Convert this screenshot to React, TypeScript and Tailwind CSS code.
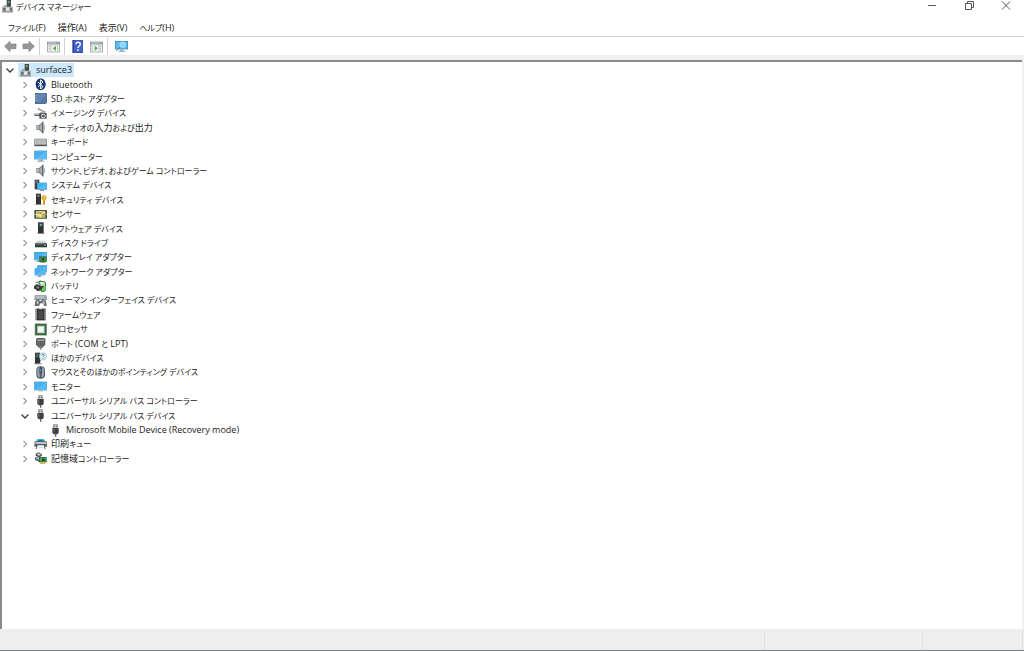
import React from "react";

type IconName =
  | "root" | "bluetooth" | "sd" | "imaging" | "speaker" | "keyboard" | "computer" | "system"
  | "security" | "sensor" | "software" | "disk" | "display" | "network" | "battery" | "hid"
  | "firmware" | "processor" | "port" | "other" | "mouse" | "monitor" | "usb" | "printer" | "storage";

const screen = (x: number, y: number, w: number, h: number) => (
  <>
    <rect x={x} y={y} width={w} height={h} fill="#2f83bd" />
    <rect x={x + 1} y={y + 1} width={w - 2} height={h - 2} fill="#44b0f2" />
    <path d={`M${x + 1} ${y + h - 1}L${x + w - 1} ${y + 1}V${y + h - 1}Z`} fill="#58bbf6" />
  </>
);

const drawings: Record<IconName, React.ReactNode> = {
  root: (
    <>
      <rect x="17" y="0" width="13" height="21" fill="#47494b" />
      <rect x="20" y="4" width="6" height="5" fill="#4fd16b" />
      <path d="M8 15h9v7H8z" fill="#a6a8aa" />
      <path d="M3 20h33v17H3z" fill="#b7babc" />
      <path d="M6 23h8v9H6zM26 23h7v9h-7z" fill="#6d7073" />
      <path d="M15 23h10v9H15z" fill="#e4e6e7" />
      <path d="M3 34h33v3H3z" fill="#85888a" />
    </>
  ),
  bluetooth: (
    <>
      <ellipse cx="20" cy="19" rx="15" ry="18" fill="#17396f" />
      <path d="M12 12l15 14-7 7V5l7 7-15 14" fill="none" stroke="#fff" strokeWidth="3" />
    </>
  ),
  sd: (
    <>
      <path d="M3 3h36v29l-5 4H3z" fill="#4d6a94" />
      <path d="M5 5h32v26H5z" fill="#6686b3" />
      <path d="M4 10h3v2H4zM4 15h3v2H4zM4 20h3v2H4zM4 25h3v2H4z" fill="#c6d3e5" />
      <path d="M12 34l24-25v22l-3 3z" fill="#5877a5" />
    </>
  ),
  imaging: (
    <>
      <path d="M13 3l22 11-2 4-22-11z" fill="#6c6c6c" />
      <path d="M15 6l17 9" stroke="#e2e2e2" strokeWidth="2" />
      <path d="M1 20h20v7H1z" fill="#606366" />
      <path d="M3 20h16v3H3z" fill="#d9dadb" />
      <path d="M16 18h22v17H16z" fill="#4a4d50" />
      <path d="M19 15h9v4h-9z" fill="#a4a7aa" />
      <circle cx="28" cy="27" r="7" fill="#e0e2e3" />
      <circle cx="28" cy="27" r="4" fill="#414c59" />
    </>
  ),
  speaker: (
    <>
      <path d="M7 12h8L28 1v37L15 27H7z" fill="#85888b" />
      <path d="M9 14h5v11H9z" fill="#b9bcbf" />
      <path d="M17 14l7-6v22l-7-5z" fill="#a9adb0" />
      <path d="M24 5l4-4v37l-4-3z" fill="#63666a" />
      <path d="M29 10c4 5 4 14 0 19" fill="none" stroke="#9fa3a6" strokeWidth="3" />
    </>
  ),
  keyboard: (
    <>
      <rect x="1" y="8" width="38" height="23" rx="1" fill="#777a7d" />
      <rect x="3" y="10" width="34" height="16" fill="#c2c5c7" />
      <path d="M5 13h30M5 17h30M5 21h30" stroke="#a6aaad" strokeWidth="2" strokeDasharray="3 1" />
      <path d="M2 28h36" stroke="#4c4f51" strokeWidth="3" />
    </>
  ),
  computer: (
    <>
      {screen(1, 2, 38, 26)}
      <path d="M15 28h11v4h5v3H9v-3h6z" fill="#9da8b0" />
    </>
  ),
  system: (
    <>
      <path d="M2 2h14v29H2z" fill="#3c3f42" />
      <path d="M5 5h8v3H5z" fill="#89969c" />
      <path d="M5 10h3v3H5z" fill="#45d36c" />
      {screen(9, 11, 30, 21)}
      <path d="M18 32h12v4H18z" fill="#8c969d" />
    </>
  ),
  security: (
    <>
      <rect x="6" y="2" width="15" height="33" fill="#303234" />
      <path d="M8 5h11v7H8z" fill="#515558" />
      <path d="M11 7h4v4h-4z" fill="#52dd70" />
      <path d="M27 20h6v15l-3 2-3-3z" fill="#d69c27" />
      <circle cx="30" cy="14" r="8" fill="#e4b342" />
      <circle cx="30" cy="10" r="2" fill="#fff1bd" />
      <path d="M2 34h22v2H2z" fill="#9a9c9e" />
    </>
  ),
  sensor: (
    <>
      <rect x="1" y="6" width="38" height="26" rx="2" fill="#4e5142" />
      <rect x="6" y="9" width="28" height="20" fill="#d3c971" />
      <path d="M7 10h9v7H7zM24 22h9v6h-9z" fill="#9dc06d" />
      <path d="M6 20l12 1 7-6h8M19 9v20" fill="none" stroke="#fff0ad" strokeWidth="3" />
      <path d="M17 13h5v5h-5zM27 17h4v4h-4z" fill="#d45b37" />
      <path d="M2 17h3v4H2zM35 17h3v4h-3z" fill="#babdaf" />
    </>
  ),
  software: (
    <>
      <rect x="12" y="1" width="17" height="32" fill="#303335" />
      <path d="M15 4h11v9H15z" fill="#505458" />
      <path d="M18 6h5v5h-5z" fill="#4ce174" />
      <path d="M10 33h21v3H10z" fill="#8e9193" />
    </>
  ),
  disk: (
    <>
      <path d="M9 14h24l6 10H3z" fill="#d0d3d5" />
      <path d="M3 22h36v12H3z" fill="#3a3d40" />
      <path d="M5 24h33v2H5z" fill="#717578" />
      <path d="M31 28h5v2h-5z" fill="#5bdd73" />
    </>
  ),
  display: (
    <>
      {screen(1, 3, 38, 25)}
      <path d="M8 28h12v5H8z" fill="#929ca3" />
      <path d="M16 16h22v17H16z" fill="#246b3c" />
      <path d="M19 19h16v10H19z" fill="#519c56" />
      <path d="M23 21h8v7h-8z" fill="#283d32" />
      <path d="M19 33h16v3H19z" fill="#d9ae42" />
    </>
  ),
  network: (
    <>
      {screen(10, 1, 29, 21)}
      <rect x="1" y="9" width="32" height="23" fill="#fff" />
      {screen(2, 10, 30, 21)}
      <path d="M11 31h11v5H11z" fill="#8aa2b3" />
      <path d="M34 23v6" stroke="#75a7c8" strokeWidth="3" fill="none" />
    </>
  ),
  battery: (
    <>
      <path d="M13 5l5-4 5 2h8l5 6v22l-5 5h-9z" fill="#3e7f43" />
      <path d="M17 6h15v12H17z" fill="#d9e6d6" />
      <path d="M22 18h13v13l-6 4-7-4z" fill="#62c755" />
      <path d="M1 17l8-5 14 7 4-3 2 3-4 5-5 8-10 1-7-7-4 1z" fill="#363a39" />
      <path d="M9 18l7 3-3 6-6-5z" fill="#89908c" />
      <path d="M5 8c7-5 10 2 15 6" stroke="#555b58" strokeWidth="3" fill="none" />
    </>
  ),
  hid: (
    <>
      <path d="M2 4h35v14H2z" fill="#73787c" />
      <path d="M4 6h31v10H4z" fill="#bfc4c8" />
      <path d="M6 9h27M6 13h27" stroke="#9ca1a5" strokeWidth="2" strokeDasharray="3 2" />
      <path d="M2 36l2-15 6-5h5l2 5h5l2-5h7l5 5 2 15h-7l-4-8h-8l-4 8z" fill="#626970" />
      <path d="M8 20h6v11H8zM26 20h6v11h-6z" fill="#b6bbc0" />
      <path d="M31 7h7v12h-7z" fill="#89a4b7" />
    </>
  ),
  firmware: (
    <>
      <path d="M4 2h32v35H4z" fill="#777" />
      <path d="M9 2h7v4h8V2h7v35H9z" fill="#333436" />
      <path d="M13 9h14v24H13z" fill="#484a4b" />
      <path d="M4 8h5M4 14h5M4 20h5M4 26h5M4 32h5M31 8h5M31 14h5M31 20h5M31 26h5M31 32h5" stroke="#c6c8c9" strokeWidth="2" />
    </>
  ),
  processor: (
    <>
      <path d="M2 1h37v37H2z" fill="#b0a27c" />
      <path d="M4 3h33v33H4z" fill="#286747" />
      <path d="M9 8h23v23H9z" fill="#b5c2b5" />
      <path d="M12 11h17v17H12z" fill="#f4f5ef" />
    </>
  ),
  port: (
    <>
      <path d="M9 3h22l3 4v16l-6 6H12l-6-6V7z" fill="#55585a" />
      <path d="M9 7h22v5H9z" fill="#9ca0a2" />
      <path d="M11 13v11M17 13v12M23 13v12M29 13v10" stroke="#85898b" strokeWidth="2" />
      <path d="M13 28h14v5H13zM18 33h4v5h-4z" fill="#777b7d" />
    </>
  ),
  other: (
    <>
      <path d="M3 2h15v33H3z" fill="#333638" />
      <path d="M5 5h11v5H5z" fill="#5c6264" />
      <path d="M7 11h4v4H7z" fill="#42e077" />
      <circle cx="27" cy="13" r="11" fill="#e0f1f6" stroke="#91afb8" strokeWidth="1.5" />
      <path d="M23 10c0-5 8-5 8 0 0 3-4 3-4 5M27 18v3" stroke="#398ab2" strokeWidth="3" fill="none" />
      <path d="M1 34h22v3H1zM18 24l4 2-4 5z" fill="#777a7c" />
    </>
  ),
  mouse: (
    <>
      <rect x="7" y="1" width="26" height="37" rx="12" fill="#555c64" />
      <path d="M10 12c0-5 3-8 7-9v32c-5-1-7-5-7-10zM23 3c5 1 7 4 7 9v13c0 5-2 9-7 10z" fill="#97a3b2" />
      <path d="M17 4h6v17h-6z" fill="#26364d" />
      <path d="M19 8h2v10h-2z" fill="#79b6e4" />
    </>
  ),
  monitor: (
    <>
      {screen(1, 5, 38, 26)}
      <path d="M14 31h12v3H14z" fill="#97a0a6" />
    </>
  ),
  usb: (
    <>
      <path d="M13 1h13v12H13z" fill="#777" />
      <path d="M15 3h9v9h-9z" fill="#c8c8c8" />
      <path d="M16 5h2v4h-2zM21 5h2v4h-2z" fill="#444" />
      <path d="M10 12h19v14l-4 5H14l-4-5z" fill="#3d3f40" />
      <path d="M13 14h3v12h-3z" fill="#6c6f71" />
      <path d="M18 31h4v7h-4z" fill="#5a5d5f" />
    </>
  ),
  printer: (
    <>
      <path d="M9 4h22l3 8H6z" fill="#35a9c6" />
      <path d="M14 5h12v5H14z" fill="#2866a5" />
      <path d="M2 10h36l1 16H1z" fill="#595e61" />
      <path d="M4 12h32v6H4z" fill="#bdc1c3" />
      <path d="M9 20h22l4 13H5z" fill="#545a5d" />
      <path d="M11 22h18l3 11H8z" fill="#f8f9f9" />
      <path d="M13 27h13v2H13z" fill="#9fd2de" />
    </>
  ),
  storage: (
    <>
      <path d="M5 5l9-4 9 5 1 6-9 4-10-5z" fill="#4d5357" />
      <path d="M8 7l6-3 7 4-6 3z" fill="#d3d7d9" />
      <path d="M3 17l10-4 11 7v8l-9 2-12-7z" fill="#575e60" />
      <path d="M5 18l8-3 9 6-8 3z" fill="#b9bebf" />
      <path d="M15 15h23v16H15z" fill="#256a3d" />
      <path d="M18 17h17v11H18z" fill="#51a26a" />
      <path d="M24 20h8v7h-8z" fill="#253d34" />
      <path d="M18 31h16v5H18z" fill="#dfb63c" />
    </>
  ),
};

function Icon({ name }: { name: IconName }) {
  return (
    <svg viewBox="0 0 39 39" className="size-[13px] shrink-0" aria-hidden="true">
      {drawings[name]}
    </svg>
  );
}

/* Kana are set one step smaller than Latin letters and kanji. */
function Label({ text }: { text: string }) {
  const runs = text.match(/[\u3001\u3040-\u30ff]+(?: [\u3040-\u30ff]+)*|[^\u3001\u3040-\u30ff]+/g) ?? [];
  return (
    <span className="whitespace-pre">
      {runs.map((run, i) => (
        <span key={i} className={/[\u3040-\u30ff]/.test(run) ? "text-[8px]" : "text-[9px]"}>
          {run}
        </span>
      ))}
    </span>
  );
}

type Row = { text: string; icon: IconName; level: 1 | 2 | 3; open?: boolean };

const rows: Row[] = [
  { text: "surface3", icon: "root", level: 1, open: true },
  { text: "Bluetooth", icon: "bluetooth", level: 2 },
  { text: "SD ホスト アダプター", icon: "sd", level: 2 },
  { text: "イメージング デバイス", icon: "imaging", level: 2 },
  { text: "オーディオの入力および出力", icon: "speaker", level: 2 },
  { text: "キーボード", icon: "keyboard", level: 2 },
  { text: "コンピューター", icon: "computer", level: 2 },
  { text: "サウンド、ビデオ、およびゲーム コントローラー", icon: "speaker", level: 2 },
  { text: "システム デバイス", icon: "system", level: 2 },
  { text: "セキュリティ デバイス", icon: "security", level: 2 },
  { text: "センサー", icon: "sensor", level: 2 },
  { text: "ソフトウェア デバイス", icon: "software", level: 2 },
  { text: "ディスク ドライブ", icon: "disk", level: 2 },
  { text: "ディスプレイ アダプター", icon: "display", level: 2 },
  { text: "ネットワーク アダプター", icon: "network", level: 2 },
  { text: "バッテリ", icon: "battery", level: 2 },
  { text: "ヒューマン インターフェイス デバイス", icon: "hid", level: 2 },
  { text: "ファームウェア", icon: "firmware", level: 2 },
  { text: "プロセッサ", icon: "processor", level: 2 },
  { text: "ポート (COM と LPT)", icon: "port", level: 2 },
  { text: "ほかのデバイス", icon: "other", level: 2 },
  { text: "マウスとそのほかのポインティング デバイス", icon: "mouse", level: 2 },
  { text: "モニター", icon: "monitor", level: 2 },
  { text: "ユニバーサル シリアル バス コントローラー", icon: "usb", level: 2 },
  { text: "ユニバーサル シリアル バス デバイス", icon: "usb", level: 2, open: true },
  { text: "Microsoft Mobile Device (Recovery mode)", icon: "usb", level: 3 },
  { text: "印刷キュー", icon: "printer", level: 2 },
  { text: "記憶域コントローラー", icon: "storage", level: 2 },
];

const indent = { 1: "pl-[5px]", 2: "pl-[20px]", 3: "pl-[48px]" };

function TreeRow({ row }: { row: Row }) {
  const root = row.level === 1;
  return (
    <li
      role="treeitem"
      aria-level={row.level}
      aria-selected={root}
      aria-expanded={row.level === 3 ? undefined : !!row.open}
      className={`flex min-h-0 items-center ${indent[row.level]}`}
    >
      {row.level !== 3 && (
        <button type="button" aria-label={`${row.text} の展開`} className="mr-[3px] flex size-[10px] shrink-0 items-center justify-center">
          <svg viewBox="0 0 10 10" className="size-[10px]" fill="none" strokeWidth="1.3" aria-hidden="true">
            {row.open ? <path d="M1.5 3.5L5 7l3.5-3.5" stroke="#3c3c3c" /> : <path d="M3.5 2L6.5 5 3.5 8" stroke="#a0a0a0" />}
          </svg>
        </button>
      )}
      <span className={`flex h-full items-center gap-1 pl-px pr-[2px] ${root ? "bg-[#cce8ff]" : ""}`}>
        <Icon name={row.icon} />
        <Label text={row.text} />
      </span>
    </li>
  );
}

function Arrow({ back }: { back?: boolean }) {
  return (
    <svg viewBox="0 0 39 39" className="size-[13px]" aria-hidden="true">
      <path
        d={back ? "M2 19L18 4v8h18v14H18v9z" : "M37 19L21 4v8H3v14h18v9z"}
        fill="#979797"
        stroke="#7c7c7c"
        strokeWidth="2"
        strokeLinejoin="round"
      />
    </svg>
  );
}

function PanelIcon({ right }: { right?: boolean }) {
  return (
    <svg viewBox="0 0 39 39" className="size-[13px]" aria-hidden="true">
      <path d="M0 5h39v32H0z" fill="#8d9399" />
      <path d="M2 13h35v22H2z" fill="#f5f6f6" />
      <path d="M3 7h25v4H3z" fill="#bcc5ce" />
      <path d="M30 8h6v2h-6z" fill="#edf0f2" />
      <path d={right ? "M26 13h2v22h-2zM2 14h35v2H2z" : "M11 13h2v22h-2zM2 14h35v2H2z"} fill="#a7adb2" />
      {right ? (
        <>
          <path d="M14 17l10 8-10 8z" fill="#51b539" />
          <path d="M30 20h4M30 25h4M30 30h4M5 20h4M5 25h4M5 30h4" stroke="#858f99" strokeWidth="2" />
        </>
      ) : (
        <>
          <path d="M27 17l-10 8 10 8z" fill="#51b539" />
          <path d="M5 20h4M5 25h4M5 30h4M30 20h4M30 25h4M30 30h4" stroke="#858f99" strokeWidth="2" />
        </>
      )}
    </svg>
  );
}

function HelpIcon() {
  return (
    <svg viewBox="0 0 39 39" className="size-[13px]" aria-hidden="true">
      <path d="M4 0h32v39H4z" fill="#2f459a" />
      <path d="M9 1h26v36H9z" fill="#4564cb" />
      <path d="M15 13c0-9 13-9 13 0 0 5-7 5-7 11M21 28v5" fill="none" stroke="#fff" strokeWidth="4" />
    </svg>
  );
}

function ScanIcon() {
  return (
    <svg viewBox="0 0 39 39" className="size-[13px]" aria-hidden="true">
      <path d="M0 3h39v25H0z" fill="#3488b7" />
      <path d="M2 5h35v21H2z" fill="#5dbceb" />
      <path d="M14 28h12v5h5v3H11v-3h3z" fill="#a5b3bd" />
      <path d="M17 20L4 32" stroke="#477c9c" strokeWidth="3" />
      <circle cx="23" cy="14" r="8" fill="#8ad6f6" stroke="#c5ebfa" strokeWidth="2" />
    </svg>
  );
}

function Divider() {
  return <span className="h-[17px] w-px bg-[#d0d0d0]" />;
}

const tool = "flex size-[13px] items-center justify-center";
const caption = "flex h-[11px] w-[37px] items-center justify-center";

export default function App() {
  return (
    <div className="flex min-h-screen flex-col bg-white font-['Open_Sans','Noto_Sans_CJK_JP',sans-serif] text-[9px] leading-[14px] text-[#222] [font-feature-settings:'palt']">
      <header className="flex h-[20px] items-start justify-between">
        <h1 className="flex h-[13px] items-center gap-[2px] pl-px">
          <Icon name="root" />
          <Label text="デバイス マネージャー" />
        </h1>
        <div className="flex text-[#555]">
          <button type="button" aria-label="最小化" className={caption}>
            <svg viewBox="0 0 10 10" className="size-[10px]" aria-hidden="true">
              <path d="M1 4.5h8" stroke="currentColor" />
            </svg>
          </button>
          <button type="button" aria-label="元に戻す" className={caption}>
            <svg viewBox="0 0 10 10" className="size-[10px]" fill="none" stroke="currentColor" aria-hidden="true">
              <path d="M1.5 2.5h6v6h-6zM3.5 2.5v-2h6v6h-2" />
            </svg>
          </button>
          <button type="button" aria-label="閉じる" className={caption}>
            <svg viewBox="0 0 10 10" className="size-[10px]" stroke="currentColor" aria-hidden="true">
              <path d="M1 .5l8 8M9 .5l-8 8" />
            </svg>
          </button>
        </div>
      </header>

      <nav className="flex h-[17px] items-center gap-3 border-b border-[#d0d0d0] pl-2">
        {["ファイル(F)", "操作(A)", "表示(V)", "ヘルプ(H)"].map((m) => (
          <button type="button" key={m} className="flex">
            <Label text={m} />
          </button>
        ))}
      </nav>

      <div role="toolbar" aria-label="ツール" className="flex h-[18px] items-center pl-1">
        <div className="flex gap-[5px] pr-1">
          <button type="button" aria-label="戻る" className={tool}><Arrow back /></button>
          <button type="button" aria-label="進む" className={tool}><Arrow /></button>
        </div>
        <Divider />
        <div className="flex pl-[7px] pr-1">
          <button type="button" aria-label="コンソール ツリーの表示" className={tool}><PanelIcon /></button>
        </div>
        <Divider />
        <div className="flex gap-[6px] pl-[6px] pr-1">
          <button type="button" aria-label="ヘルプ" className={tool}><HelpIcon /></button>
          <button type="button" aria-label="操作ウィンドウの表示" className={tool}><PanelIcon right /></button>
        </div>
        <Divider />
        <div className="flex pl-[7px]">
          <button type="button" aria-label="ハードウェア変更のスキャン" className={tool}><ScanIcon /></button>
        </div>
      </div>

      <main className="flex flex-1 flex-col border-r-2 border-[#f0f0f0] bg-[#f0f0f0] pt-[5px]">
        <div className="flex-1 border-l-2 border-t-2 border-[#8a8a8a] bg-white pt-px">
          <ul role="tree" aria-label="デバイス" className="-ml-[2px] grid h-[403px] auto-rows-fr">
            {rows.map((row) => (
              <TreeRow key={row.text} row={row} />
            ))}
          </ul>
        </div>
      </main>

      <footer className="flex h-[22px] border-b border-[#788088] bg-[#eeeeee] pt-[2px]">
        <div className="flex-1 border-r border-[#e0e0e0]" />
        <div className="w-[158px] border-r border-[#e0e0e0]" />
        <div className="w-[100px] border-r border-[#e0e0e0]" />
        <div className="w-px" />
      </footer>
    </div>
  );
}
